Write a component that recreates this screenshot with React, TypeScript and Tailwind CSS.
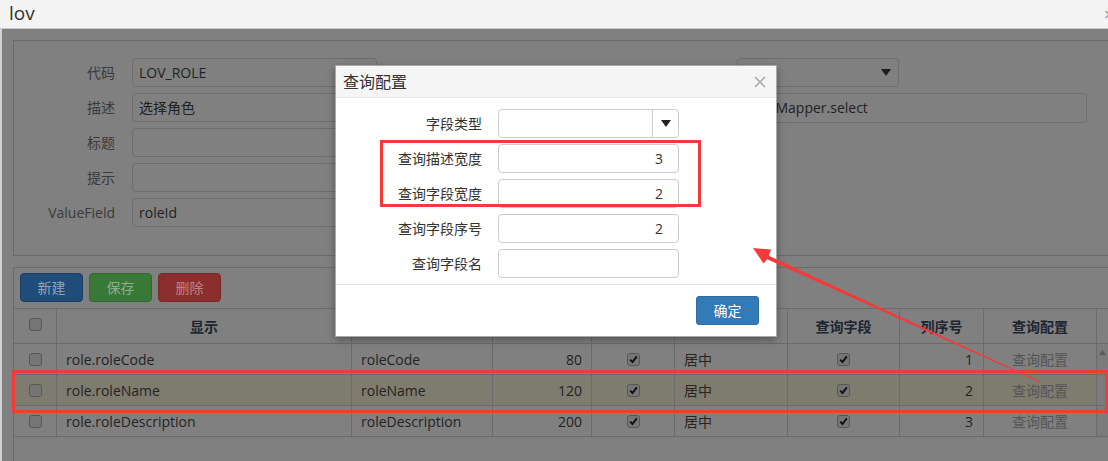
import React from "react";

const font = "font-['Open_Sans','Noto_Sans_CJK_SC',sans-serif]";

function Cb({ checked }: { checked?: boolean }) {
  return (
    <span className="w-[13px] h-[13px] rounded-[3px] border border-[#565656] bg-[#767676] flex items-center justify-center">
      {checked && (
        <svg width="11" height="11" viewBox="0 0 11 11">
          <path d="M2.2 5.6 L4.5 8 L8.8 2.4" stroke="#111" strokeWidth="2" fill="none" />
        </svg>
      )}
    </span>
  );
}

const cols = "grid grid-cols-[43px_295px_141px_99px_83px_113px_112px_84px_113px_11px]";
const cell = "border-r border-[#6b6b6b] flex items-center";

const rows = [
  { a: "role.roleCode", b: "roleCode", w: "80", n: "1" },
  { a: "role.roleName", b: "roleName", w: "120", n: "2", sel: true },
  { a: "role.roleDescription", b: "roleDescription", w: "200", n: "3" },
];

function FormRow({ label, value, right }: { label: string; value?: string; right?: React.ReactNode }) {
  return (
    <div className="flex items-center h-[29px]">
      <div className="w-[101px] shrink-0 text-right text-[14px] text-[#3a3a3a]">{label}</div>
      <div className="ml-[17px] w-[245px] shrink-0 h-[29px] rounded-[4px] border border-[#6e6e6e] flex items-center pl-[6px] text-[14px] text-[#222]">
        {value}
      </div>
      <div className="w-[343px] shrink-0" />
      <div className="ml-[17px]">{right}</div>
    </div>
  );
}

function DRow({ label, children }: { label: string; children: React.ReactNode }) {
  return (
    <div className="flex items-center h-[29px]">
      <div className="w-[146px] text-right text-[14px] text-[#333]">{label}</div>
      <div className="ml-[16px]">{children}</div>
    </div>
  );
}

function DInput({ value }: { value?: string }) {
  return (
    <div className="w-[181px] h-[29px] rounded-[4px] border border-[#cccccc] flex items-center justify-end pr-[15px] text-[14px] text-[#333]">
      {value}
    </div>
  );
}

export default function App() {
  return (
    <div className={`relative w-[1108px] h-[461px] overflow-hidden bg-[#808080] ${font}`}>
      {/* title bar */}
      <div className="h-[29px] bg-[#f4f4f4] border-b border-[#c9c9c9] flex items-center pl-[9px] text-[19px] text-[#333] leading-none">
        <span className="-mt-[2px]">lov</span>
        <span className="ml-auto mr-[-6px] text-[#999] text-[18px]">×</span>
      </div>

      {/* body */}
      <div className="flex h-[432px]">
        <div className="w-[2px] shrink-0 bg-[#d2d2d2]" />
        <div className="flex-1 min-w-0 flex flex-col pl-[11px] pt-[11px]">
          {/* panel 1 */}
          <div className="w-[1110px] h-[216px] shrink-0 border border-[#6b6b6b] pt-[17px] flex flex-col gap-[6px]">
            <FormRow
              label="代码"
              value="LOV_ROLE"
              right={
                <div className="w-[162px] h-[29px] rounded-[4px] border border-[#6e6e6e] flex items-center justify-end pr-[7px]">
                  <svg width="10" height="8" viewBox="0 0 10 8">
                    <path d="M0 0 L10 0 L5 7 Z" fill="#1c1c1c" />
                  </svg>
                </div>
              }
            />
            <FormRow
              label="描述"
              value="选择角色"
              right={
                <div className="w-[350px] h-[30px] rounded-[4px] border border-[#6e6e6e] flex items-center pl-[9px] text-[14px] text-[#222]">
                  RoleMapper.select
                </div>
              }
            />
            <FormRow label="标题" />
            <FormRow label="提示" />
            <FormRow label="ValueField" value="roleId" />
          </div>

          {/* panel 2 */}
          <div className="mt-[11px] w-[1110px] flex-1 border-l border-t border-[#6b6b6b] flex flex-col">
            <div className="flex gap-[6px] px-[6px] pt-[5px]">
              <div className="w-[63px] h-[29px] rounded-[4px] bg-[#1f4c78] border border-[#1a3f63] flex items-center justify-center text-[14px] text-[#93a5b8]">新建</div>
              <div className="w-[63px] h-[29px] rounded-[4px] bg-[#387938] border border-[#2f6a2f] flex items-center justify-center text-[14px] text-[#8fae8f]">保存</div>
              <div className="w-[63px] h-[29px] rounded-[4px] bg-[#8a2f2d] border border-[#7a2826] flex items-center justify-center text-[14px] text-[#bb8585]">删除</div>
            </div>

            <div className="mt-[6px] w-[1094px] text-[14px]">
              <div className={`${cols} h-[36px] border-t border-b border-[#6b6b6b] font-bold text-[#1c2530]`}>
                <div className={`${cell} justify-center pb-[3px]`}><Cb /></div>
                <div className={`${cell} justify-center`}>显示</div>
                <div className={`${cell} justify-center`}>字段</div>
                <div className={`${cell} justify-center`}>宽度</div>
                <div className={`${cell} justify-center`}>显示</div>
                <div className={`${cell} justify-center`}></div>
                <div className={`${cell} justify-center`}>查询字段</div>
                <div className={`${cell} justify-center`}>列序号</div>
                <div className={`${cell} justify-center`}>查询配置</div>
                <div />
              </div>
              {rows.map((r, i) => (
                <div key={i} className={`${cols} h-[31px] border-b border-[#6b6b6b] text-[#232323]`}>
                  <div className={`${cell} justify-center ${r.sel ? "bg-[#7e7c6e]" : ""}`}><Cb /></div>
                  <div className={`${cell} pl-[9px] ${r.sel ? "bg-[#7e7c6e]" : ""}`}>{r.a}</div>
                  <div className={`${cell} pl-[9px] ${r.sel ? "bg-[#7e7c6e]" : ""}`}>{r.b}</div>
                  <div className={`${cell} justify-end pr-[9px] ${r.sel ? "bg-[#7e7c6e]" : ""}`}>{r.w}</div>
                  <div className={`${cell} justify-center ${r.sel ? "bg-[#7e7c6e]" : ""}`}><Cb checked /></div>
                  <div className={`${cell} pl-[9px] text-[#2c241c] ${r.sel ? "bg-[#7e7c6e]" : ""}`}>居中</div>
                  <div className={`${cell} justify-center ${r.sel ? "bg-[#7e7c6e]" : ""}`}><Cb checked /></div>
                  <div className={`${cell} justify-end pr-[10px] ${r.sel ? "bg-[#7e7c6e]" : ""}`}>{r.n}</div>
                  <div className={`${cell} justify-center text-[#555] ${r.sel ? "bg-[#7e7c6e]" : ""}`}>查询配置</div>
                  <div className="bg-[#7b7b7b] flex justify-center items-start pt-[6px]">
                    {i === 0 && (
                      <svg width="7" height="5" viewBox="0 0 7 5">
                        <path d="M0 5 L3.5 0 L7 5 Z" fill="#5a5a5a" />
                      </svg>
                    )}
                  </div>
                </div>
              ))}
            </div>
          </div>
        </div>
      </div>

      {/* dialog */}
      <div className="absolute left-[335px] top-[65px] w-[442px] h-[272px] bg-white border border-[#a9a9a9] shadow-[0_3px_8px_rgba(0,0,0,0.35)] flex flex-col">
        <div className="h-[32px] bg-[#f5f5f5] border-b border-[#e3e3e3] flex items-center pl-[7px] pr-[10px]">
          <span className="text-[16px] text-[#333]">查询配置</span>
          <svg className="ml-auto" width="12" height="12" viewBox="0 0 12 12">
            <path d="M1 1 L11 11 M11 1 L1 11" stroke="#a3a3a3" strokeWidth="1.4" />
          </svg>
        </div>
        <div className="pt-[11px] pb-[6px] flex flex-col gap-[6px] border-b border-[#e5e5e5]">
          <DRow label="字段类型">
            <div className="w-[181px] h-[29px] rounded-[4px] border border-[#cccccc] flex">
              <div className="flex-1" />
              <div className="w-[26px] border-l border-[#cccccc] flex items-center justify-center">
                <svg width="10" height="8" viewBox="0 0 10 8">
                  <path d="M0 0 L10 0 L5 7 Z" fill="#222" />
                </svg>
              </div>
            </div>
          </DRow>
          <DRow label="查询描述宽度"><DInput value="3" /></DRow>
          <DRow label="查询字段宽度"><DInput value="2" /></DRow>
          <DRow label="查询字段序号"><DInput value="2" /></DRow>
          <DRow label="查询字段名"><DInput /></DRow>
        </div>
        <div className="flex justify-end pt-[11px] pr-[17px]">
          <div className="w-[63px] h-[29px] rounded-[3px] bg-[#337ab7] border border-[#2e6da4] flex items-center justify-center text-[14px] text-white">确定</div>
        </div>
      </div>

      {/* annotations */}
      <div className="absolute left-[380px] top-[140px] w-[321px] h-[67px] border-[3px] border-[#f23a3a]" />
      <div className="absolute left-[12px] top-[370px] w-[1096px] h-[43px] border-[3px] border-[#f23a3a]" />
      <svg className="absolute left-0 top-0 pointer-events-none" width="1108" height="461">
        <polygon
          points="753,248 771,249.5 768.8,255.7 1040.3,381.6 1039.7,382.4 767.2,259.3 763.5,263.5"
          fill="#f23a3a"
        />
      </svg>
    </div>
  );
}
